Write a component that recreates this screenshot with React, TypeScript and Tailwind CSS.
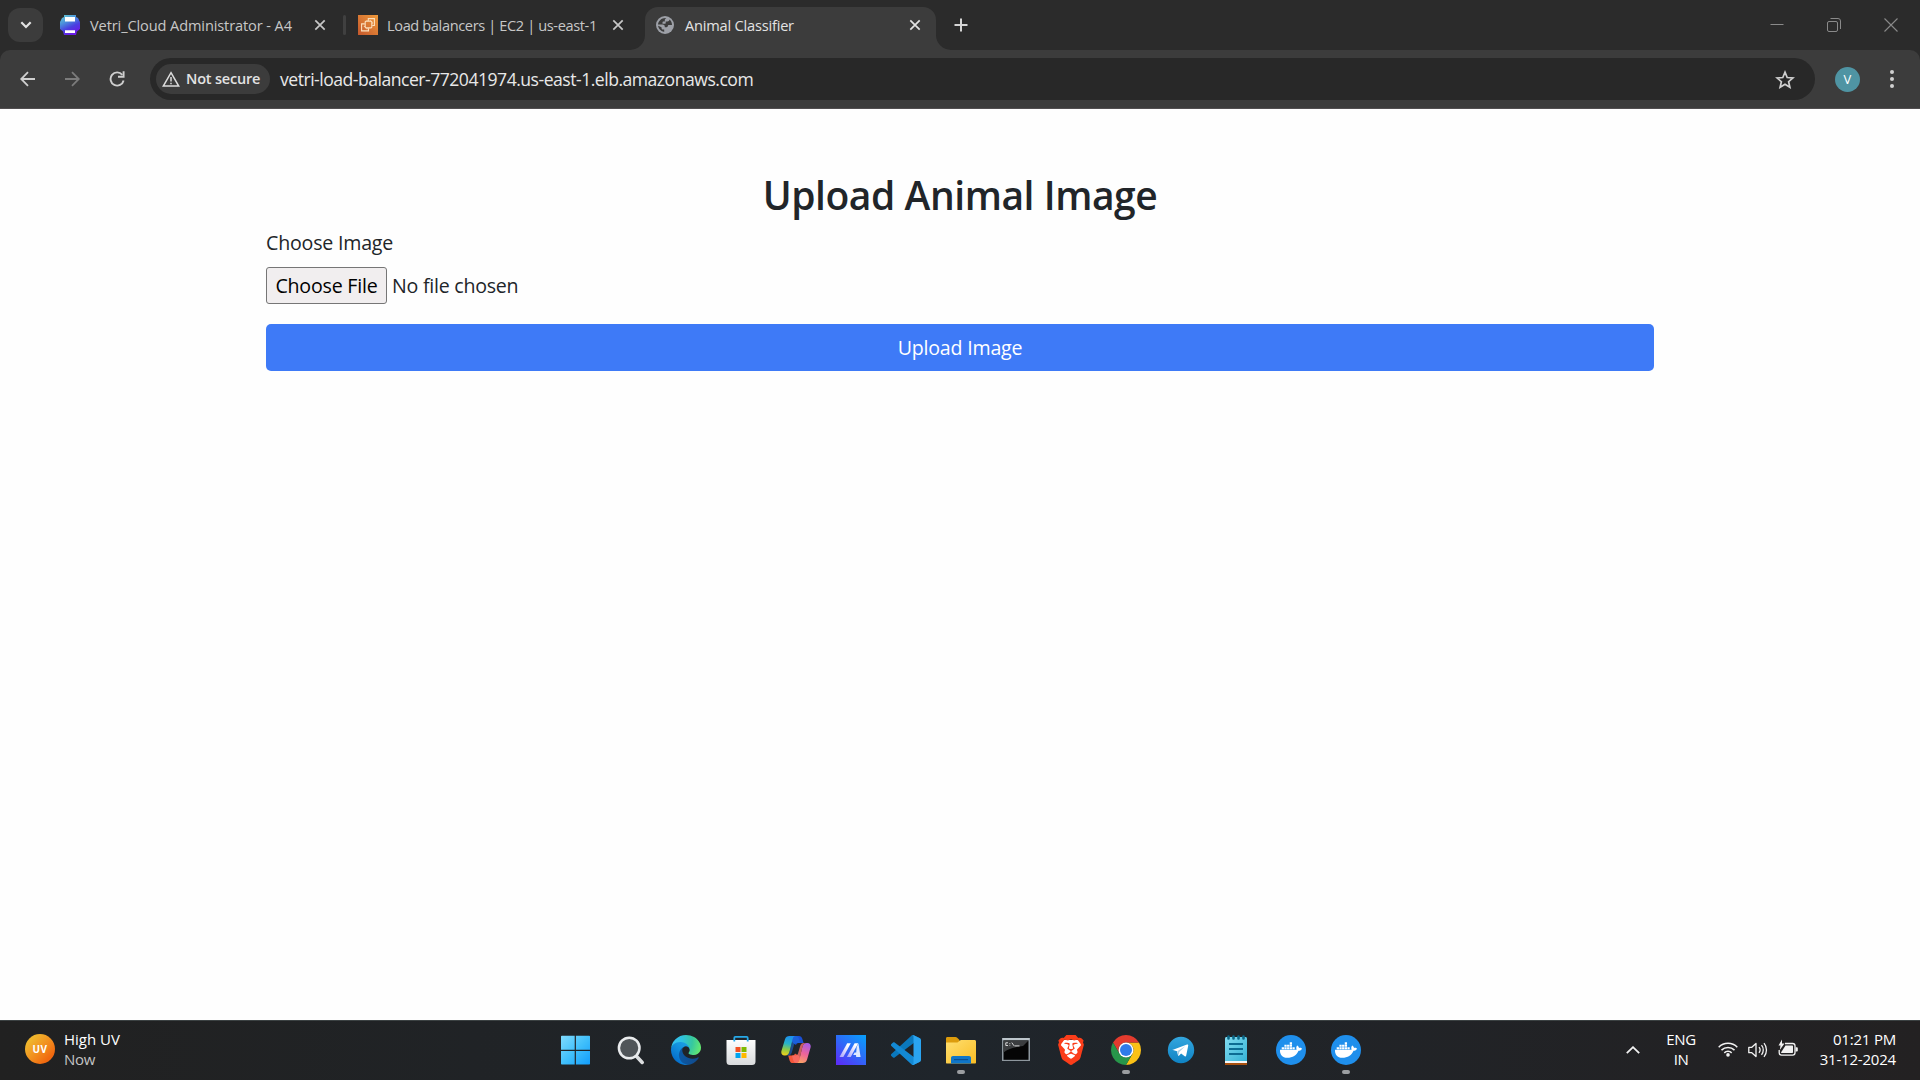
import React from 'react';
import { FaDocker } from 'react-icons/fa';
import { SiBrave } from 'react-icons/si';

/* ---------- Browser chrome icons ---------- */

function CloseX({ className = '' }: { className?: string }) {
  return (
    <svg viewBox="0 0 12 12" className={`size-3 ${className}`} fill="none" stroke="currentColor" strokeWidth="1.7">
      <path d="M1.3 1.3 10.7 10.7M10.7 1.3 1.3 10.7" />
    </svg>
  );
}

function PrinterFavicon() {
  return (
    <svg viewBox="0 0 20 20" className="size-5 shrink-0">
      <defs>
        <linearGradient id="fav1" x1="0" y1="0" x2="0.5" y2="1">
          <stop offset="0" stopColor="#67d0cf" />
          <stop offset="0.4" stopColor="#4a8fdc" />
          <stop offset="0.7" stopColor="#4a3fe0" />
          <stop offset="1" stopColor="#6a1be6" />
        </linearGradient>
      </defs>
      <path d="M4 0h12v2l2 1 2 4v7l-3 2.5-1 3.5H4l-1-3.5L0 14V7l2-4 2-1z" fill="url(#fav1)" />
      <path d="M5 2h10v4.6H5zM5 15.3h10V18H5z" fill="#fff" />
    </svg>
  );
}

function Ec2Favicon() {
  return (
    <svg viewBox="0 0 20 20" className="size-5 shrink-0">
      <defs>
        <linearGradient id="ec2" x1="0" y1="1" x2="1" y2="0">
          <stop offset="0" stopColor="#c4572c" />
          <stop offset="1" stopColor="#ef9a3b" />
        </linearGradient>
      </defs>
      <path d="M0 0h20v20H0z" fill="url(#ec2)" />
      <g fill="none" stroke="#fbe0bd" strokeWidth="1.1">
        <rect x="7.2" y="6.3" width="6.6" height="6.6" rx="0.8" />
        <path d="M10.3 6V3.6h6.1v6.9h-2.2M6.8 8.9H3.6v7h6.9v-2.6" />
        <path d="M9 5v1.3M12.2 5v1.3M5.8 11.4h1.4M13.8 8h1.3M9 13v1.3" strokeWidth="0.9" />
      </g>
    </svg>
  );
}

function GlobeFavicon() {
  return (
    <svg viewBox="0 0 18 18" className="size-[18px] shrink-0">
      <circle cx="9" cy="9" r="9" fill="#9da0a7" />
      <path d="M10.300 2.100C6 1.600 2.300 4.700 2 8.600h4.600c1.300 0 2.200.9 2.200 2.100v.6h1.700c.8 0 1.300-.5 1.300-1.200 0-.7.500-1.200 1.200-1.200h3c0-2.300-1-4.100-2.500-5.300-.1 1.200-1 2-2.200 2H9.700v1.300c0 .5-.5.900-1 .9H6.500V6.500c0-.6.400-1 1-1h1.300V4.300c0-.9.600-1.700 1.500-2.200z" fill="#3c3c3c" />
      <path d="M2.100 9.800c.4 3.200 3 5.700 6.100 6.100v-2.500H7c-.9 0-1.500-.7-1.500-1.500v-.7z" fill="#3c3c3c" />
    </svg>
  );
}

/* ---------- Taskbar icons ---------- */

function WindowsIcon() {
  return (
    <svg viewBox="0 0 30 30" className="size-[30px]">
      <defs>
        <linearGradient id="win" x1="0" y1="0" x2="30" y2="30" gradientUnits="userSpaceOnUse">
          <stop offset="0" stopColor="#82dcfd" />
          <stop offset="0.5" stopColor="#41c0fb" />
          <stop offset="1" stopColor="#0f9bfb" />
        </linearGradient>
      </defs>
      <path d="M0 1.500a.8.8 0 0 1 .8-.8H13.700v14H0zM14.900.7h13.300a.8.8 0 0 1 .8.800v13.200H14.900zM0 16H13.700v13.500H.8a.8.8 0 0 1-.8-.8zM14.900 16H29v12.700a.8.8 0 0 1-.8.800H14.900z" fill="url(#win)" />
    </svg>
  );
}

function SearchIcon() {
  return (
    <svg viewBox="0 0 30 30" className="size-[30px]">
      <path d="m20 20.800 6.200 6.600" stroke="#dcdee0" strokeWidth="3.600" strokeLinecap="round" />
      <circle cx="13.200" cy="13" r="10.300" fill="#505559" stroke="#e9ebed" strokeWidth="2.500" />
    </svg>
  );
}

function EdgeIcon() {
  return (
    <svg viewBox="0 0 256 256" className="size-[30px]">
      <defs>
        <linearGradient id="ea" x1="60" y1="178" x2="236" y2="178" gradientUnits="userSpaceOnUse">
          <stop offset="0" stopColor="#0c59a4" />
          <stop offset="1" stopColor="#114a8b" />
        </linearGradient>
        <linearGradient id="eb" x1="150" y1="90" x2="45" y2="220" gradientUnits="userSpaceOnUse">
          <stop offset="0" stopColor="#1b9de2" />
          <stop offset="0.3" stopColor="#1595df" />
          <stop offset="1" stopColor="#0670cc" />
        </linearGradient>
        <radialGradient id="ec" cx="26" cy="48" r="240" gradientUnits="userSpaceOnUse">
          <stop offset="0" stopColor="#35c1f1" />
          <stop offset="0.3" stopColor="#2fc2df" />
          <stop offset="0.65" stopColor="#36c7a0" />
          <stop offset="1" stopColor="#66eb6e" />
        </radialGradient>
      </defs>
      <path fill="url(#ea)" d="M231.070 190.540c-3.370 1.760-6.920 3.290-10.530 4.700a101.990 101.990 0 0 1-35.930 6.460c-47.350 0-88.600-32.570-88.600-74.370a31.500 31.500 0 0 1 16.430-27.300c-42.830 1.800-53.840 46.430-53.840 72.580 0 73.940 68.140 81.440 82.820 81.440 7.920 0 19.860-2.300 27.030-4.570l1.310-.44a128.340 128.340 0 0 0 66.600-52.800 4.100 4.100 0 0 0-5.290-5.700z" />
      <path fill="url(#eb)" d="M105.730 241.420a79.200 79.200 0 0 1-22.750-21.350 80.750 80.750 0 0 1 29.480-120.070c3.120-1.470 8.450-4.120 15.540-4a32.350 32.350 0 0 1 25.690 13 31.880 31.880 0 0 1 6.360 18.660c0-.21 24.460-79.600-80-79.600-43.900 0-80 41.660-80 78.210a130.150 130.150 0 0 0 12.110 56 128 128 0 0 0 156.380 67.110 75.550 75.550 0 0 1-62.780-8z" />
      <path fill="url(#ec)" d="M152.330 148.860c-.81 1.050-3.300 2.500-3.300 5.660 0 2.610 1.700 5.120 4.720 7.230 14.380 10 41.490 8.680 41.560 8.680a59.560 59.560 0 0 0 30.270-8.350A61.380 61.380 0 0 0 256 109.180c.26-22.410-8-37.310-11.340-43.910C223.460 23.840 177.720 0 128 0A128 128 0 0 0 0 126.200c.48-36.540 36.800-66.050 80-66.050 3.500 0 23.460.34 42 10.070 16.340 8.580 24.900 18.940 30.850 29.210 6.180 10.670 7.280 24.150 7.280 29.520s-2.740 13.330-7.800 19.900z" />
    </svg>
  );
}

function StoreIcon() {
  return (
    <svg viewBox="0 0 30 30" className="size-[30px]">
      <defs>
        <linearGradient id="bag" x1="0" y1="0" x2="0" y2="1">
          <stop offset="0" stopColor="#fdfdfd" />
          <stop offset="1" stopColor="#d9dbdd" />
        </linearGradient>
      </defs>
      <path d="M.5 5h29v21.500a3.500 3.500 0 0 1-3.500 3.500H4a3.500 3.500 0 0 1-3.500-3.500z" fill="url(#bag)" />
      <path d="M8.300 6.500V2.900c0-.6.400-1 1-1h11.400c.6 0 1 .4 1 1v3.600" fill="none" stroke="#27a9e8" strokeWidth="1.800" />
      <path d="M9.500 12h5v5h-5z" fill="#f25022" />
      <path d="M15.500 12h5v5h-5z" fill="#7fba00" />
      <path d="M9.500 18h5v5h-5z" fill="#00a4ef" />
      <path d="M15.500 18h5v5h-5z" fill="#ffb900" />
    </svg>
  );
}

function CopilotIcon() {
  return (
    <svg viewBox="0 0 30 30" className="size-[30px]">
      <defs>
        <linearGradient id="cpl" x1="10" y1="1" x2="6" y2="21" gradientUnits="userSpaceOnUse">
          <stop offset="0" stopColor="#1d8df0" />
          <stop offset="0.4" stopColor="#27b3c9" />
          <stop offset="0.7" stopColor="#8fcb45" />
          <stop offset="1" stopColor="#f4d01a" />
        </linearGradient>
        <linearGradient id="cpr" x1="25" y1="8" x2="17" y2="28" gradientUnits="userSpaceOnUse">
          <stop offset="0" stopColor="#a75be6" />
          <stop offset="0.5" stopColor="#ee6499" />
          <stop offset="1" stopColor="#fba85f" />
        </linearGradient>
      </defs>
      <path d="M8 1h10c1.700 0 2.700.9 3.200 2.600L22.600 8H18c-1.500 0-2.500.6-3 2L12 8z" fill="#1a4fd6" />
      <path d="M21.500 28H11.800c-1.700 0-2.700-.9-3.200-2.600L7.200 20.600H11c1.500 0 2.500-.6 3-2L18 21z" fill="#f4573b" />
      <path d="M8.500 1h6c-1.500.3-2.300 1.500-2.800 3.200L8.600 16.500c-.7 2.700-2 4.100-4.300 4.100H3.500C.8 20.600-.2 18.300.5 15.800L4 4.200C4.700 2.100 6.200 1 8.500 1z" fill="url(#cpl)" />
      <path d="M14.500 1c-1.500.3-2.300 1.500-2.800 3.200L8.600 16.500c-.7 2.700-2 4.100-4.300 4.100H7c2 0 3.200-.9 3.800-3L13 10c.6-1.500 1.500-2 3-2h3l-1-4c-.4-1.900-1.500-3-3.500-3z" fill="#1e6fe0" opacity="0.55" />
      <path d="M21.500 28h-6c1.500-.3 2.300-1.500 2.800-3.200l3.100-12.700c.7-2.700 2-4.100 4.300-4.100h.8c2.700 0 3.700 2.300 3 4.800L26 24.800c-.7 2.100-2.200 3.200-4.500 3.200z" fill="url(#cpr)" />
      <path d="M15.500 28c1.500-.3 2.300-1.500 2.800-3.200l3.100-12.700c.7-2.700 2-4.100 4.300-4.100H23c-2 0-3.200.9-3.800 3L17 18.600c-.6 1.500-1.500 2-3 2h-3l1 4c.4 1.900 1.500 3.400 3.500 3.400z" fill="#f86f6a" opacity="0.8" />
    </svg>
  );
}

function SlashAIcon() {
  return (
    <svg viewBox="0 0 30 30" className="size-[30px]">
      <defs>
        <linearGradient id="sq" x1="0.1" y1="1" x2="0.9" y2="0">
          <stop offset="0" stopColor="#5b2df7" />
          <stop offset="0.5" stopColor="#2f68f8" />
          <stop offset="1" stopColor="#0a9dfb" />
        </linearGradient>
        <linearGradient id="sl" x1="1" y1="0" x2="0" y2="1">
          <stop offset="0.2" stopColor="#fff" />
          <stop offset="1" stopColor="#a9a2fa" />
        </linearGradient>
      </defs>
      <path d="M0 0h30v30H0z" fill="url(#sq)" />
      <path d="M11.200 8.300h3.600L7.300 22H3.500z" fill="url(#sl)" />
      <path d="M18.600 8.300h3.600L14.700 22h-3.800z" fill="url(#sl)" />
      <path d="M22.400 8.300 24.600 22h-4.400l-.2-2h-2.800l1.400-2.600h1.600l.5-5.600z" fill="#dfe9ff" />
    </svg>
  );
}

function CodeIcon() {
  return (
    <svg viewBox="0 0 100 100" className="size-[30px]">
      <path fill="#0a78bd" d="M96.461 10.796 75.857.876a6.230 6.230 0 0 0-7.107 1.207L1.299 63.583c-1.815 1.655-1.813 4.511.004 6.163l5.510 5.009c1.485 1.350 3.721 1.450 5.320.237L93.360 13.370c2.725-2.067 6.640-.124 6.640 3.297v-.240a6.250 6.250 0 0 0-3.539-5.631z" />
      <path fill="#1389d4" d="M96.461 89.204 75.857 99.125a6.230 6.230 0 0 1-7.107-1.208L1.299 36.417c-1.815-1.655-1.813-4.511.004-6.163l5.510-5.009c1.485-1.350 3.721-1.450 5.320-.237L93.360 86.630c2.725 2.067 6.640.124 6.640-3.297v.239a6.250 6.250 0 0 1-3.539 5.632z" />
      <path fill="#2aa4f1" d="M75.858 99.126a6.230 6.230 0 0 1-7.109-1.210c2.306 2.306 6.251.673 6.251-2.588V4.672c0-3.261-3.945-4.894-6.251-2.588a6.230 6.230 0 0 1 7.109-1.210l20.601 9.907A6.250 6.250 0 0 1 100 16.413v67.174a6.250 6.250 0 0 1-3.541 5.632z" />
    </svg>
  );
}

function FolderIcon() {
  return (
    <svg viewBox="0 0 30 30" className="size-[30px]">
      <defs>
        <linearGradient id="fold" x1="0" y1="0" x2="1" y2="1">
          <stop offset="0" stopColor="#ffdf70" />
          <stop offset="1" stopColor="#f9bd24" />
        </linearGradient>
      </defs>
      <path d="M0 3.500C0 2.500.6 2 1.500 2h8c.7 0 1.200.2 1.700.7L13.500 5v4H0z" fill="#dd9c0c" />
      <path d="M0 7.500h10.500c.7 0 1.200-.2 1.700-.6l1.300-1.200c.5-.5 1-.7 1.700-.7h13.300c.9 0 1.500.6 1.500 1.500v21c0 .6-.5 1-1 1H1c-.6 0-1-.4-1-1z" fill="url(#fold)" />
      <path d="M5 28.500V23c0-1.100.8-2 2-2h16c1.200 0 2 .9 2 2v5.500z" fill="#0f76c8" />
      <path d="M8 24.600h14" stroke="#0a4f92" strokeWidth="1.200" />
    </svg>
  );
}

function TerminalIcon() {
  return (
    <svg viewBox="0 0 30 30" className="size-[30px]">
      <path d="M1 3h28v23H1z" fill="#8e979e" />
      <path d="M1.500 3.200h27v1.600h-27z" fill="#c9d2d8" />
      <path d="M2.500 5.500h25V24.800h-25z" fill="#050505" />
      <path d="M2.500 5.500h25L22 11c-9 1-15 3-19.500 6.500z" fill="#3b3d3f" />
      <path d="M7 7.800H4.800v2.700H7M8.800 8v.8M8.800 9.800v.8M10.800 7.600l2.200 3.200M13.500 10.900h5" stroke="#e8e8e8" strokeWidth="0.900" fill="none" />
    </svg>
  );
}

function BraveIcon() {
  return (
    <div className="relative grid h-[30px] w-[26px] place-items-center">
      <div className="h-[20px] w-[20px] rounded-b-xl bg-white" />
      <SiBrave className="absolute inset-0 size-full" preserveAspectRatio="none" viewBox="1.7 0 20.6 24" color="#fb3d1a" />
    </div>
  );
}

function ChromeIcon() {
  return (
    <svg viewBox="0 0 30 30" className="size-[30px]">
      <path d="M15 7.500H27.990A15 15 0 0 1 15 30L21.495 18.750A7.500 7.500 0 0 0 15 7.500z" fill="#fbc116" />
      <path d="M2.010 7.500A15 15 0 0 1 27.990 7.500H15A7.500 7.500 0 0 0 8.505 18.750z" fill="#e33b2e" />
      <path d="M2.010 7.500 8.505 18.750A7.500 7.500 0 0 0 21.495 18.750L15 30A15 15 0 0 1 2.010 7.500z" fill="#27964a" />
      <circle cx="15" cy="15" r="7.500" fill="#fff" />
      <circle cx="15" cy="15" r="6" fill="#2f7be9" />
    </svg>
  );
}

function TelegramIcon() {
  return (
    <svg viewBox="0 0 30 30" className="size-[30px]">
      <defs>
        <linearGradient id="tg" x1="0" y1="0" x2="0" y2="1">
          <stop offset="0" stopColor="#33a6de" />
          <stop offset="1" stopColor="#0f83c4" />
        </linearGradient>
      </defs>
      <circle cx="15" cy="15" r="13.200" fill="url(#tg)" />
      <path d="M7 14.700 21 9.500c.8-.3 1.400.2 1.200 1.200l-2 9.900c-.2.900-.8 1.100-1.500.7l-3.600-2.700-1.900 1.900c-.5.400-1.100.3-1.200-.3l-1-4-4-1.100c-.6-.2-.6-.8 0-.4z" fill="#fff" />
      <path d="m11.200 16.200 8-4.900-6 5.800-.5 3.600z" fill="#a9cfe6" />
    </svg>
  );
}

function NotepadIcon() {
  return (
    <svg viewBox="0 0 30 30" className="size-[30px]">
      <defs>
        <linearGradient id="np" x1="0" y1="0" x2="1" y2="1">
          <stop offset="0" stopColor="#83dcf0" />
          <stop offset="1" stopColor="#35b3d6" />
        </linearGradient>
      </defs>
      <path d="M4 27h22v3H4z" fill="#a8500f" />
      <path d="M4 25h22v3H4z" fill="#f4f6f7" />
      <path d="M4 3.500C4 2.600 4.600 2 5.500 2h19c.9 0 1.500.6 1.500 1.500V26H4z" fill="url(#np)" />
      <path d="M7.500 1.500v2M12.500 1.500v2M17.500 1.500v2M22.500 1.500v2" stroke="#0c6787" strokeWidth="2.600" strokeLinecap="round" />
      <path d="M8 9h14M8 14h14M8 19h14" stroke="#0d6c93" strokeWidth="1.900" />
    </svg>
  );
}

function DockerIcon() {
  return (
    <div className="grid size-[30px] place-items-center rounded-full bg-[#1f8fec]">
      <FaDocker className="size-[22px] text-white" />
    </div>
  );
}

const taskbarApps: { Icon: () => React.ReactElement; running?: boolean }[] = [
  { Icon: WindowsIcon },
  { Icon: SearchIcon },
  { Icon: EdgeIcon },
  { Icon: StoreIcon },
  { Icon: CopilotIcon },
  { Icon: SlashAIcon },
  { Icon: CodeIcon },
  { Icon: FolderIcon, running: true },
  { Icon: TerminalIcon },
  { Icon: BraveIcon },
  { Icon: ChromeIcon, running: true },
  { Icon: TelegramIcon },
  { Icon: NotepadIcon },
  { Icon: DockerIcon },
  { Icon: DockerIcon, running: true },
];

/* ---------- Sections ---------- */

function TabStrip() {
  return (
    <div className="flex h-[50px] items-center bg-[#2b2b2b] text-[14.600px] text-[#c7c7c7]">
      <button className="ml-2 grid h-[34px] w-[35px] place-items-center rounded-xl bg-[#3c3c3c]">
        <svg viewBox="0 0 12 8" className="h-2 w-3" fill="none" stroke="#e3e3e3" strokeWidth="2.200">
          <path d="M1.300 1.300 6 6l4.700-4.700" />
        </svg>
      </button>
      <div className="ml-[17px] flex items-center">
        <PrinterFavicon />
        <span className="ml-2.5 w-[215px] whitespace-nowrap pt-[2px] tracking-[-0.120px]">Vetri_Cloud Administrator - A4</span>
        <div className="grid w-[30px] place-items-center"><CloseX /></div>
      </div>
      <div className="ml-2 h-5 w-[3px] rounded-full bg-[#404040]" />
      <div className="ml-3 flex items-center">
        <Ec2Favicon />
        <span className="ml-[9px] w-[218px] whitespace-nowrap pt-[2px] tracking-[-0.380px]">Load balancers | EC2 | us-east-1</span>
        <div className="grid w-[25px] place-items-center"><CloseX /></div>
      </div>
      <div className="size-[15px] self-end bg-[#3c3c3c]"><div className="size-full rounded-br-[15px] bg-[#2b2b2b]" /></div>
      <div className="flex h-[43px] w-[291px] items-center self-end rounded-t-[13px] bg-[#3c3c3c] pb-[7px] pl-[11px] text-[#e3e3e3]">
        <GlobeFavicon />
        <span className="ml-[11px] flex-1 pt-[2px] tracking-[-0.200px]">Animal Classifier</span>
        <CloseX className="mr-[15px]" />
      </div>
      <div className="size-[15px] self-end bg-[#3c3c3c]"><div className="size-full rounded-bl-[15px] bg-[#2b2b2b]" /></div>
      <svg viewBox="0 0 14 14" className="ml-[3px] size-3.5" fill="none" stroke="#d5d5d5" strokeWidth="2">
        <path d="M7 .5v13M.5 7h13" />
      </svg>
      <div className="ml-auto mr-[22px] flex items-center gap-[43px] text-[#8a8a8a]">
        <svg viewBox="0 0 14 14" className="size-3.5" stroke="currentColor"><path d="M.5 6.500h13" /></svg>
        <svg viewBox="0 0 14 14" className="size-3.5" fill="none" stroke="currentColor">
          <rect x=".5" y="3.500" width="10" height="10" rx="1.500" />
          <path d="M3.500.5H11A2.500 2.500 0 0 1 13.500 3v8" />
        </svg>
        <svg viewBox="0 0 14 14" className="size-3.5" stroke="currentColor" strokeWidth="1.100"><path d="m.5.5 13 13m0-13-13 13" /></svg>
      </div>
    </div>
  );
}

function Toolbar() {
  return (
    <div className="bg-[#2b2b2b]">
      <div className="flex h-[59px] items-center rounded-t-[10px] border-b border-[#514e50] bg-[#3c3c3c]">
        <svg viewBox="0 0 16 16" className="ml-5 size-4" fill="none" stroke="#cfcfcf" strokeWidth="1.800">
          <path d="M15 8H1.500M8 1.200 1.200 8 8 14.800" />
        </svg>
        <svg viewBox="0 0 16 16" className="ml-[28px] size-4" fill="none" stroke="#7b7b7b" strokeWidth="1.800">
          <path d="M1 8h13.500M8 1.200 14.800 8 8 14.800" />
        </svg>
        <svg viewBox="0 0 16 16" className="ml-[29px] size-4" fill="none" stroke="#cfcfcf" strokeWidth="1.900">
          <path d="M13.300 3.800A6.600 6.600 0 1 0 14.600 9.500" />
          <path d="M14.600.3v5.500H9" />
        </svg>
        <div className="ml-[25px] flex h-[42px] w-[1665px] items-center rounded-full bg-[#282828] pl-1.5 pr-5">
          <div className="flex h-[30px] w-[114px] items-center rounded-full bg-[#3c3c3c] pl-1.5 text-[14.500px] font-semibold tracking-[-0.200px] text-[#e3e3e3]">
            <svg viewBox="0 0 18 16" className="h-4 w-[18px] shrink-0" fill="none" stroke="#dcdcdc" strokeWidth="1.500">
              <path d="M9 1.700 16.700 15H1.300z" />
              <path d="M9 6v4.500M9 11.700v1.500" />
            </svg>
            <span className="ml-1.5 whitespace-nowrap">Not secure</span>
          </div>
          <span className="ml-2.5 flex-1 whitespace-nowrap pt-px text-[17.600px] tracking-[-0.500px] text-[#e8e8e8]">
            vetri-load-balancer-772041974.us-east-1.elb.amazonaws.com
          </span>
          <svg viewBox="0 0 20 19" className="h-[19px] w-5" fill="none" stroke="#cfcfcf" strokeWidth="1.700">
            <path d="m10 2.200 2.200 5.300 5.700.5-4.300 3.700 1.300 5.600-4.900-3-4.900 3 1.300-5.600L2.100 8l5.700-.5z" />
          </svg>
        </div>
        <div className="ml-5 grid size-[25px] place-items-center rounded-full bg-[#4f94a3] text-[13px] leading-none text-white">V</div>
        <svg viewBox="0 0 4 18" className="ml-[30px] h-[18px] w-1" fill="#d0d0d0">
          <circle cx="2" cy="2" r="2" /><circle cx="2" cy="9" r="2" /><circle cx="2" cy="16" r="2" />
        </svg>
      </div>
    </div>
  );
}

function UploadPage() {
  return (
    <main className="h-[911px] bg-[#fefefe] px-[266px] pt-[62px] text-[19.600px] text-[#212529]">
      <h1 className="text-center text-[39px] font-semibold leading-[48px] tracking-[-0.450px]">Upload Animal Image</h1>
      <label className="mt-[9px] block leading-[30px] tracking-[-0.200px]">Choose Image</label>
      <div className="mt-[9px] flex h-9 items-center">
        <button className="h-[37px] w-[121px] shrink-0 whitespace-nowrap rounded-[3px] border border-[#767676] bg-[#f1eeef] pt-[2px] tracking-[-0.200px] text-black">Choose File</button>
        <span className="ml-[5px] pt-[2px] tracking-[-0.240px]">No file chosen</span>
      </div>
      <button className="mt-[21px] block h-[47px] w-full rounded-[5px] bg-[#3e7af7] pt-px tracking-[-0.200px] text-white">Upload Image</button>
    </main>
  );
}

function Taskbar() {
  return (
    <footer className="grid h-[60px] grid-cols-[548px_825px_1fr] border-t border-[#3b4142] bg-linear-to-r from-[#212121] via-[#1f252b] to-[#232122] text-[15px] leading-5 text-white">
      <div className="flex items-start pl-[25px] pt-[8px]">
        <div className="mt-[5px] grid size-[30px] place-items-center rounded-full bg-linear-to-br from-[#efb52c] from-20% to-[#f0680f] to-80% text-[10px] font-bold tracking-[0.500px]">UV</div>
        <div className="ml-[9px]">
          <div>High UV</div>
          <div className="tracking-[-0.300px] text-[#c4c4c4]">Now</div>
        </div>
      </div>
      <div className="flex">
        {taskbarApps.map(({ Icon, running }, i) => (
          <div key={i} className="flex w-[55px] flex-col items-center pt-[14px]">
            <Icon />
            {running && <div className="mt-[5px] h-1 w-2 rounded-full bg-[#9b9ea1]" />}
          </div>
        ))}
      </div>
      <div className="flex pr-6">
        <svg viewBox="0 0 14 8" className="ml-[253px] mt-[25px] h-2 w-3.5" fill="none" stroke="#f2f2f2" strokeWidth="1.800">
          <path d="M.8 7.200 7 1.200l6.200 6" />
        </svg>
        <div className="ml-[24px] mt-[8px] w-[34px] text-center tracking-[-0.400px]">ENG<br />IN</div>
        <svg viewBox="0 0 20 16" className="ml-[20px] mt-[20px] h-4 w-5" fill="none" stroke="#f2f2f2" strokeWidth="1.500">
          <path d="M.7 6.200a13.200 13.200 0 0 1 18.600 0M3.500 9.100a9.200 9.200 0 0 1 13 0M6.300 11.900a5.200 5.200 0 0 1 7.400 0" />
          <circle cx="10" cy="13.900" r="1.800" fill="#f2f2f2" stroke="none" />
        </svg>
        <svg viewBox="0 0 20 16" className="ml-[10px] mt-[21px] h-4 w-5" fill="none" stroke="#f2f2f2" strokeWidth="1.300">
          <path d="M.8 5.300h3L8 1.500v13l-4.200-3.800h-3z" strokeLinejoin="round" />
          <path d="M11 5.200a4.400 4.400 0 0 1 0 5.600M13.500 3.200a7.400 7.400 0 0 1 0 9.600M16 1.200a10.600 10.600 0 0 1 0 13.600" />
        </svg>
        <svg viewBox="0 0 20 18" className="ml-[10px] mt-[18px] h-[18px] w-5" fill="none">
          <path d="M7 4.500h7.700A2.300 2.300 0 0 1 17 6.800v7a2.300 2.300 0 0 1-2.300 2.300H3.500a2.300 2.300 0 0 1-2.300-2.300V11" stroke="#f2f2f2" strokeWidth="1.300" />
          <path d="M7.500 6.500H14c.6 0 1 .4 1 1V13c0 .6-.4 1-1 1H4c-.5 0-.8-.2-1-.6z" fill="#f2f2f2" />
          <path d="M17.600 8.200h1c.7 0 1.200.4 1.200 1v2.200c0 .6-.5 1-1.200 1h-1zM4 .5.500 6.600h2L1.800 11 6.500 4.500H4z" fill="#f2f2f2" />
        </svg>
        <div className="ml-auto mt-[8px] whitespace-nowrap text-right tracking-[-0.200px]">01:21 PM<br />31-12-2024</div>
      </div>
    </footer>
  );
}

export default function App() {
  return (
    <div className="flex h-[1080px] w-[1920px] flex-col overflow-hidden font-['Open_Sans','Noto_Sans',sans-serif]">
      <TabStrip />
      <Toolbar />
      <UploadPage />
      <Taskbar />
    </div>
  );
}
